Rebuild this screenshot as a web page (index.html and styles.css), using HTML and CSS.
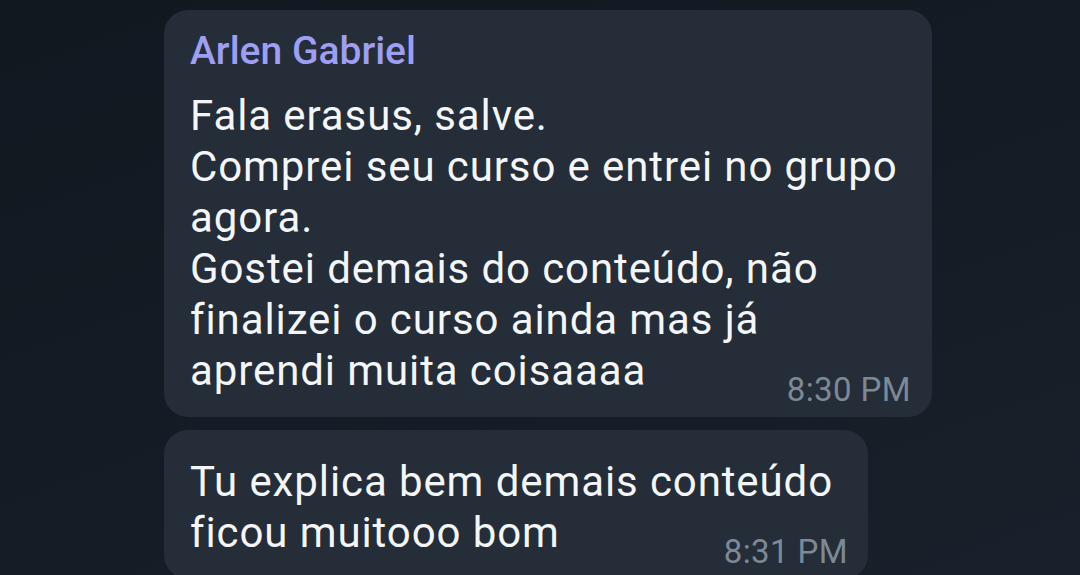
FILE: index.html
```html
<!DOCTYPE html>
<html lang="pt">
<head>
<meta charset="utf-8">
<link rel="stylesheet" href="styles.css">
</head>
<body>
<div class="chat">
  <div class="bubble first">
    <div class="name">Arlen Gabriel</div>
    <div class="body">
      <div class="text">Fala erasus, salve.<br>Comprei seu curso e entrei no grupo<br>agora.<br>Gostei demais do conteúdo, não<br>finalizei o curso ainda mas já<br>aprendi muita coisaaaa</div>
      <div class="time">8:30 PM</div>
    </div>
  </div>
  <div class="bubble second">
    <div class="body">
      <div class="text">Tu explica bem demais conteúdo<br>ficou muitooo bom</div>
      <div class="time">8:31 PM</div>
    </div>
  </div>
</div>
</body>
</html>
```
FILE: styles.css
```css
html, body {
  margin: 0;
  padding: 0;
}
body {
  width: 1080px;
  height: 575px;
  overflow: hidden;
  background: linear-gradient(160deg, #121820 0%, #151c25 60%, #18212b 100%);
  font-family: Roboto, "Noto Sans", sans-serif;
}
.chat {
  display: flex;
  flex-direction: column;
  align-items: flex-start;
  gap: 13px;
  padding: 10px 0 0 164px;
}
.bubble {
  background: #242d38;
  border-radius: 24px;
  box-sizing: border-box;
}
.first {
  width: 768px;
  padding: 21px 21px 9px 26px;
}
.second {
  width: 704px;
  padding: 26px 20px 9px 26px;
}
.name {
  color: #9e9ff2;
  font-weight: 500;
  font-size: 39px;
  line-height: 40px;
  margin-bottom: 19px;
}
.body {
  display: grid;
}
.text,
.time {
  grid-row: 1;
  grid-column: 1;
}
.text {
  align-self: start;
  padding-bottom: 12px;
  color: #f3f5f7;
  font-size: 42px;
  line-height: 51px;
  letter-spacing: 0.9px;
}
.time {
  justify-self: end;
  align-self: end;
  color: #7d8996;
  font-size: 33px;
  line-height: 36px;
  letter-spacing: 0.4px;
}
```
